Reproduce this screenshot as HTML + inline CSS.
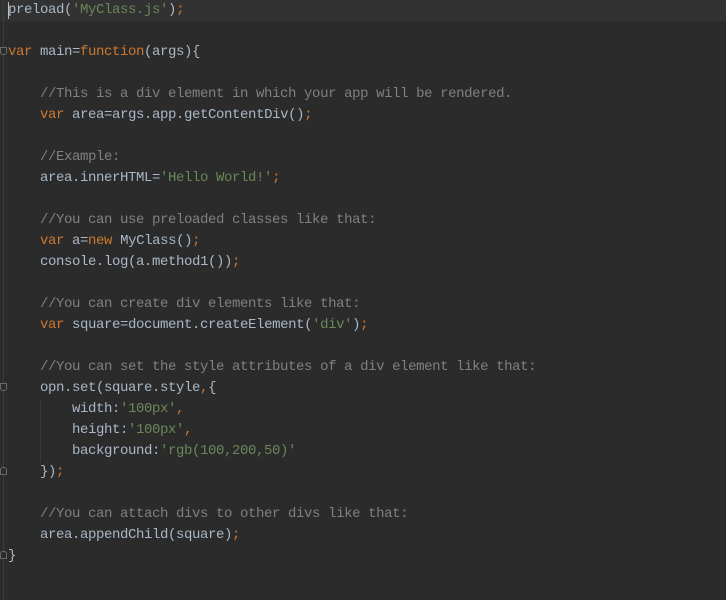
<!DOCTYPE html>
<html><head><style>
html,body{margin:0;padding:0;background:#2b2b2b;width:726px;height:600px;overflow:hidden}
.ed{position:relative;width:726px;height:600px;background:#2b2b2b}
.hl{position:absolute;left:0;top:0;width:726px;height:21px;background:#323232}
.gut{position:absolute;left:3px;top:0;width:1px;height:600px;background:#3c3c3c}
.code{position:absolute;left:8px;top:0;margin:0;font-family:"Liberation Mono",monospace;font-size:14px;letter-spacing:-0.4px;line-height:21px;color:#a9b7c6;white-space:pre}
.k{color:#cc7832}.s{color:#6a8759}.c{color:#808080}
.caret{position:absolute;left:8px;top:2px;width:1px;height:17px;background:#bbb}
.fold{position:absolute;left:0;width:7px;height:8px;border:1px solid #6a6a6a;border-radius:0 0 3px 3px;background:#2b2b2b;box-sizing:border-box}
.fold.u{border-radius:3px 3px 0 0}
.guide{position:absolute;left:40px;top:399px;width:1px;height:63px;background:#393939}
</style></head><body><div class="ed">
<div class="hl"></div><div class="gut"></div><div class="guide"></div>
<div class="fold" style="top:47px"></div>
<div class="fold" style="top:383px"></div>
<div class="fold u" style="top:467px"></div>
<div class="fold u" style="top:551px"></div>
<pre class="code">preload(<span class="s">'MyClass.js'</span>)<span class="k">;</span>

<span class="k">var </span>main=<span class="k">function</span>(args){

    <span class="c">//This is a div element in which your app will be rendered.</span>
    <span class="k">var </span>area=args.app.getContentDiv()<span class="k">;</span>

    <span class="c">//Example:</span>
    area.innerHTML=<span class="s">'Hello World!'</span><span class="k">;</span>

    <span class="c">//You can use preloaded classes like that:</span>
    <span class="k">var </span>a=<span class="k">new </span>MyClass()<span class="k">;</span>
    console.log(a.method1())<span class="k">;</span>

    <span class="c">//You can create div elements like that:</span>
    <span class="k">var </span>square=document.createElement(<span class="s">'div'</span>)<span class="k">;</span>

    <span class="c">//You can set the style attributes of a div element like that:</span>
    opn.set(square.style<span class="k">,</span>{
        width:<span class="s">'100px'</span><span class="k">,</span>
        height:<span class="s">'100px'</span><span class="k">,</span>
        background:<span class="s">'rgb(100,200,50)'</span>
    })<span class="k">;</span>

    <span class="c">//You can attach divs to other divs like that:</span>
    area.appendChild(square)<span class="k">;</span>
}</pre>
<div class="caret"></div>
</div></body></html>
